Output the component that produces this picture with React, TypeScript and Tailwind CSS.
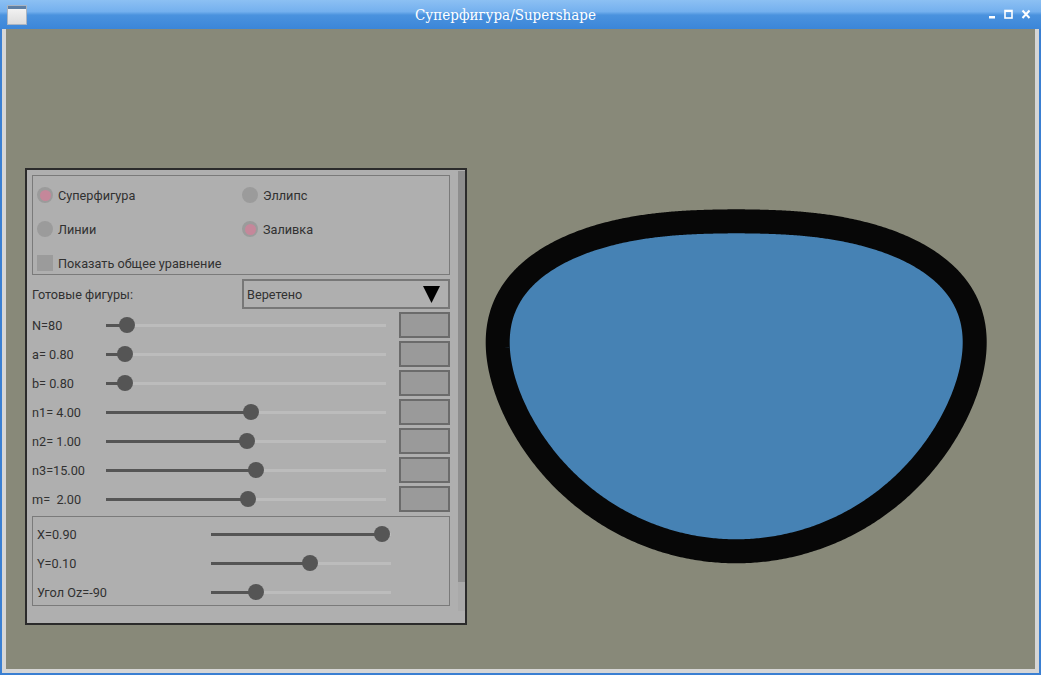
import React from "react";

const FONT = "font-['Roboto','Liberation_Sans',sans-serif]";

// supershape outline, fitted into the box the picture shows
const superPath = () => {
  const m = 2, n1 = 4, n2 = 1, n3 = 15, a = 0.8, b = 0.8;
  const pts: [number, number][] = [];
  for (let i = 0; i < 720; i++) {
    const phi = (i / 720) * Math.PI * 2;
    const t = (m * phi) / 4;
    const r = Math.pow(
      Math.pow(Math.abs(Math.cos(t) / a), n2) + Math.pow(Math.abs(Math.sin(t) / b), n3),
      -1 / n1
    );
    const ang = phi + Math.PI / 2;
    pts.push([r * Math.cos(ang), r * Math.sin(ang)]);
  }
  const xs = pts.map((p) => p[0]);
  const ys = pts.map((p) => p[1]);
  const minX = Math.min(...xs), maxX = Math.max(...xs);
  const minY = Math.min(...ys), maxY = Math.max(...ys);
  const X0 = 491.7, X1 = 968.7, Y0 = 192.3, Y1 = 522.3;
  const sx = (X1 - X0) / (maxX - minX);
  const sy = (Y1 - Y0) / (maxY - minY);
  return (
    pts
      .map(
        (p, i) =>
          `${i ? "L" : "M"}${(X0 + (p[0] - minX) * sx).toFixed(2)} ${(Y0 + (p[1] - minY) * sy).toFixed(2)}`
      )
      .join(" ") + " Z"
  );
};

const Radio = ({ label, checked }: { label: string; checked?: boolean }) => (
  <div className="flex items-center h-[20px]">
    <span className="w-[16px] h-[16px] rounded-full bg-[#9b9b9b] flex items-center justify-center">
      {checked && <span className="w-[11px] h-[11px] rounded-full bg-[#c5879a]" />}
    </span>
    <span className="ml-[5px] pt-px">{label}</span>
  </div>
);

const Slider = ({ width, pos }: { width: number; pos: number }) => (
  <div className="relative h-[26px] shrink-0" style={{ width }}>
    <div className="absolute left-0 right-0 top-[12px] h-[3px] bg-[#bcbcbc]" />
    <div className="absolute left-0 top-[12px] h-[3px] bg-[#555555]" style={{ width: pos }} />
    <div
      className="absolute top-[5px] w-[16px] h-[16px] -ml-[8px] rounded-full bg-[#555555]"
      style={{ left: pos }}
    />
  </div>
);

const params = [
  { label: "N=80", pos: 21 },
  { label: "a= 0.80", pos: 19 },
  { label: "b= 0.80", pos: 19 },
  { label: "n1= 4.00", pos: 145 },
  { label: "n2= 1.00", pos: 141 },
  { label: "n3=15.00", pos: 150 },
  { label: "m=  2.00", pos: 142 },
];

const place = [
  { label: "X=0.90", pos: 171 },
  { label: "Y=0.10", pos: 99 },
  { label: "Угол Oz=-90", pos: 45 },
];

const ControlPanel = () => (
  <div className="ml-[19px] mt-[139px] w-[442px] h-[457px] border-2 border-[#2b2b2b] bg-[#afafaf] flex">
    <div className={`w-[423px] pl-[5px] pt-[5px] flex flex-col text-[12.7px] text-[#313131] ${FONT}`}>
      <div className="w-[418px] h-[100px] border border-[#7a7a7a] pl-[4px] pt-[9px] flex flex-col gap-[14px]">
        <div className="grid grid-cols-[205px_1fr]">
          <Radio label="Суперфигура" checked />
          <Radio label="Эллипс" />
        </div>
        <div className="grid grid-cols-[205px_1fr]">
          <Radio label="Линии" />
          <Radio label="Заливка" checked />
        </div>
        <div className="flex items-center h-[20px]">
          <span className="w-[16px] h-[16px] bg-[#9b9b9b]" />
          <span className="ml-[5px] pt-px">Показать общее уравнение</span>
        </div>
      </div>

      <div className="flex items-center h-[30px] mt-[4px]">
        <span className="w-[210px] pt-px">Готовые фигуры:</span>
        <div className="w-[208px] h-[30px] border-2 border-[#777777] flex items-center justify-between pl-[3px] pr-[8px]">
          <span className="pt-px">Веретено</span>
          <svg width="17" height="17" viewBox="0 0 17 17">
            <polygon points="0,0 17,0 8.5,17" fill="#000" />
          </svg>
        </div>
      </div>

      <div className="flex flex-col gap-[3px] mt-[3px]">
        {params.map((p) => (
          <div key={p.label} className="flex items-center h-[26px]">
            <span className="w-[74px] whitespace-pre pt-px">{p.label}</span>
            <Slider width={280} pos={p.pos} />
            <div className="ml-[13px] w-[51px] h-[26px] border-2 border-[#6b6b6b] bg-[#9a9a9a]" />
          </div>
        ))}
      </div>

      <div className="mt-[4px] w-[418px] h-[90px] border border-[#7a7a7a] pl-[4px] pt-[4px] flex flex-col gap-[3px]">
        {place.map((p) => (
          <div key={p.label} className="flex items-center h-[26px]">
            <span className="w-[174px] pt-px">{p.label}</span>
            <Slider width={180} pos={p.pos} />
          </div>
        ))}
      </div>
    </div>
    <div className="mt-px ml-[8px] w-[10px] h-[440px] bg-[#a9a9a9] flex flex-col">
      <div className="h-[411px] bg-[#8e8e8e]" />
    </div>
  </div>
);

export default function App() {
  const d = superPath();
  return (
    <div className="w-[1041px] h-[675px] flex flex-col bg-[#3a7fd2] overflow-hidden">
      <div className="h-[29px] shrink-0 relative flex items-center justify-center bg-[linear-gradient(to_bottom,#8cc0f3_0%,#74b0ee_40%,#4a92de_52%,#3b86d9_100%)]">
        <div className="absolute left-[7px] top-[5px] w-[20px] h-[20px] border border-[#a9b4c2] bg-[linear-gradient(to_bottom,#f6f6f6,#dcdcdc)] flex flex-col">
          <div className="h-[3px] bg-[#5d7fa5]" />
        </div>
        <span className="text-white text-[15px] font-['DejaVu_Serif_Condensed','DejaVu_Serif',serif] [font-stretch:condensed] pt-[1px] mr-[30px]">
          Суперфигура/Supershape
        </span>
        <div className="absolute right-[10px] top-[9px] flex items-end gap-[8px]">
          <svg width="8" height="10" viewBox="0 0 8 10">
            <rect x="1" y="7" width="6" height="2.5" fill="#fff" />
          </svg>
          <svg width="9" height="10" viewBox="0 0 9 10">
            <rect x="1" y="1.5" width="7" height="7.5" fill="none" stroke="#fff" strokeWidth="1.6" />
            <rect x="1" y="1" width="7" height="2" fill="#fff" />
          </svg>
          <svg width="10" height="10" viewBox="0 0 10 10">
            <path d="M1.5 1.5 L8.5 9 M8.5 1.5 L1.5 9" stroke="#fff" strokeWidth="2" />
          </svg>
        </div>
      </div>
      <div className="flex-1 px-[2px] pb-[2px] flex flex-col">
        <div className="flex-1 bg-[#d6d6d6] px-[4px] pb-[4px] flex flex-col">
          <div className="flex-1 relative bg-[#888979]">
            <svg className="absolute inset-0" width="1029" height="640" viewBox="0 0 1029 640">
              <path d={d} fill="#4682b4" stroke="#070707" strokeWidth="24" strokeLinejoin="round" />
            </svg>
            <div className="relative flex">
              <ControlPanel />
            </div>
          </div>
        </div>
      </div>
    </div>
  );
}
